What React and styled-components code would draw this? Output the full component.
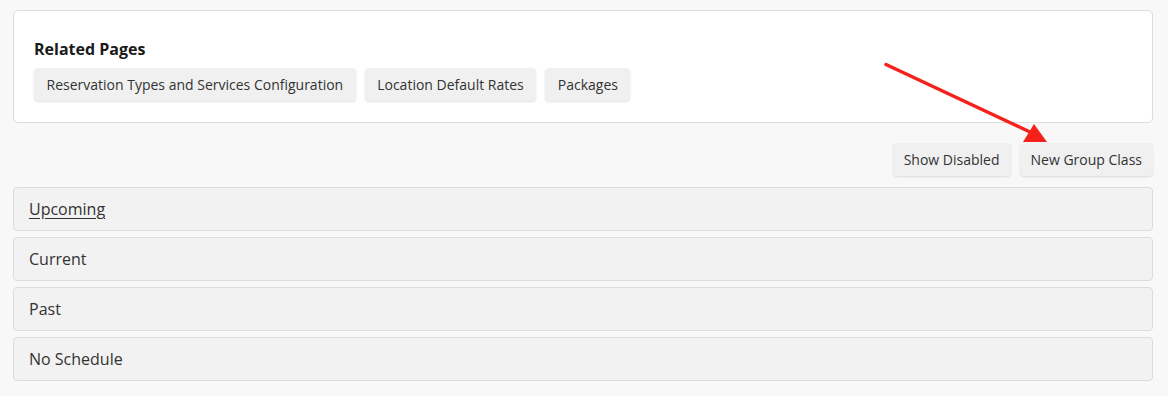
import React from 'react';
import styled, { createGlobalStyle } from 'styled-components';

const GlobalStyle = createGlobalStyle`
  html, body {
    margin: 0;
    padding: 0;
    background: #f8f8f8;
  }
  body {
    font-family: 'Open Sans', 'Liberation Sans', sans-serif;
    color: #333;
  }
`;

const relatedPages = [
  'Reservation Types and Services Configuration',
  'Location Default Rates',
  'Packages',
];

const sections = [
  { id: 'upcoming', title: 'Upcoming', active: true },
  { id: 'current', title: 'Current' },
  { id: 'past', title: 'Past' },
  { id: 'none', title: 'No Schedule' },
];

const App = () => {
  return (
    <>
      <GlobalStyle />
      <StPage>
        <StCard>
          <StCardTitle>Related Pages</StCardTitle>
          <StButtonRow>
            {relatedPages.map((page) => (
              <StButton key={page}>{page}</StButton>
            ))}
          </StButtonRow>
        </StCard>

        <StToolbar>
          <StButton tall>Show Disabled</StButton>
          <StButton tall>New Group Class</StButton>
        </StToolbar>

        <StSectionList>
          {sections.map(({ id, title, active }) => (
            <StSection key={id}>
              <StSectionTitle active={active}>{title}</StSectionTitle>
            </StSection>
          ))}
        </StSectionList>

        <StArrow width="1168" height="396" viewBox="0 0 1168 396">
          <line
            x1="886"
            y1="64.5"
            x2="1030"
            y2="132"
            stroke="#f5221b"
            strokeWidth="3.5"
            strokeLinecap="round"
          />
          <polygon points="1034,124 1023,142 1047,142" fill="#f5221b" />
        </StArrow>
      </StPage>
    </>
  );
};

const StPage = styled.div`
  position: relative;
  width: 1168px;
  height: 396px;
  box-sizing: border-box;
  padding: 10px 15px 0 13px;
  display: flex;
  flex-direction: column;
`;

const StCard = styled.div`
  background: #fff;
  border: 1px solid #dcdcdc;
  border-radius: 5px;
  padding: 27px 20px 21px;
  display: flex;
  flex-direction: column;
  gap: 8px;
`;

const StCardTitle = styled.h3`
  margin: 0;
  font-size: 16px;
  line-height: 22px;
  font-weight: 700;
  color: #1a1a1a;
`;

const StButtonRow = styled.div`
  display: flex;
  gap: 9px;
`;

const StButton = styled.button`
  height: 33px;
  padding: 0 ${({ tall }) => (tall ? '11px' : '12.5px')};
  border: none;
  border-radius: 4px;
  background: #f0f0f0;
  box-shadow: 0 1px 2px rgba(0, 0, 0, 0.12);
  font-family: 'Open Sans', 'Liberation Sans', sans-serif;
  font-size: 14px;
  color: #333;
  cursor: pointer;
`;

const StToolbar = styled.div`
  display: flex;
  justify-content: flex-end;
  gap: 9px;
  margin-top: 20px;
`;

const StSectionList = styled.div`
  display: flex;
  flex-direction: column;
  gap: 6px;
  margin-top: 11px;
`;

const StSection = styled.div`
  height: 44px;
  box-sizing: border-box;
  display: flex;
  align-items: center;
  padding: 0 15px;
  background: #f2f2f2;
  border: 1px solid #dcdcdc;
  border-radius: 4px;
`;

const StSectionTitle = styled.span`
  font-size: 16px;
  color: #333;
  text-decoration: ${({ active }) => (active ? 'underline' : 'none')};
  text-underline-offset: 3px;
`;

const StArrow = styled.svg`
  position: absolute;
  top: 0;
  left: 0;
  pointer-events: none;
`;

export default App;
